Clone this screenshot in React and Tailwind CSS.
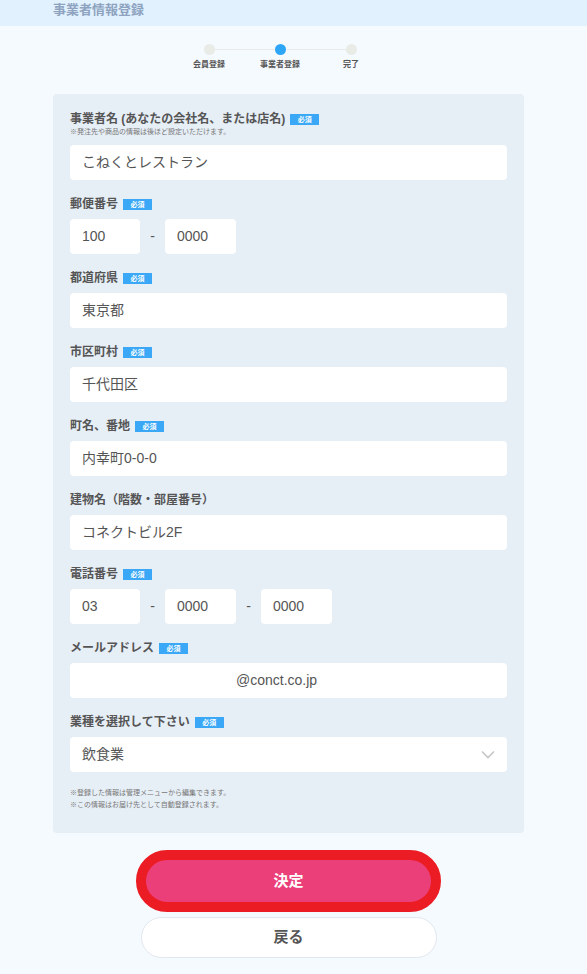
import React from "react";

const FONT = { fontFamily: '"Liberation Sans", "Noto Sans CJK JP", sans-serif' };

function Badge() {
  return (
    <span className="ml-[5px] inline-flex h-[11px] w-[29px] items-center justify-center bg-[#3aa8f6] text-[7px] leading-none text-white">
      必須
    </span>
  );
}

function Label({ children, required }) {
  return (
    <div className="flex h-4 items-center text-[12px] font-bold leading-4 text-[#555]">
      <span>{children}</span>
      {required && <Badge />}
    </div>
  );
}

function Box({ children, className = "" }) {
  return (
    <div
      className={`flex h-[35px] items-center rounded-[4px] bg-white px-3 text-[14px] text-[#555] ${className}`}
    >
      {children}
    </div>
  );
}

function Field({ label, required, children, note }) {
  return (
    <div className="mb-4">
      <Label required={required}>{label}</Label>
      {note ? (
        <p className="mb-[8px] text-[7px] leading-[10px] text-[#777]">{note}</p>
      ) : (
        <div className="h-[7px]" />
      )}
      {children}
    </div>
  );
}

function Dash() {
  return <span className="w-[25px] text-center text-[14px] text-[#555]">-</span>;
}

export default function App() {
  const steps = ["会員登録", "事業者登録", "完了"];

  return (
    <div className="min-h-[974px] w-full bg-[#f5faff]" style={FONT}>
      {/* header */}
      <div className="flex h-[26px] items-start bg-[#e1f1fe] pl-[53px]">
        <h1 className="text-[13px] font-bold leading-[20px] text-[#8ea3bf]">事業者情報登録</h1>
      </div>

      {/* stepper */}
      <div className="ml-[53px] w-[471px] pt-[18px]">
        <div className="mr-[17px] flex flex-col items-center">
          <div className="flex w-[153px] items-center">
            <span className="h-[11px] w-[11px] rounded-full bg-[#e8ebe6]" />
            <span className="h-px flex-1 bg-[#e8ebe6]" />
            <span className="h-[11px] w-[11px] rounded-full bg-[#2ea6f7]" />
            <span className="h-px flex-1 bg-[#e8ebe6]" />
            <span className="h-[11px] w-[11px] rounded-full bg-[#e8ebe6]" />
          </div>
          <div className="mt-[5px] grid w-[213px] grid-cols-3">
            {steps.map((s) => (
              <span key={s} className="text-center text-[8px] font-bold leading-[10px] text-[#555]">
                {s}
              </span>
            ))}
          </div>
        </div>

        {/* form panel */}
        <div className="mt-[24px] rounded-[4px] bg-[#e6eef6] px-[17px] pb-[22px] pt-[17px]">
          <Field
            label="事業者名 (あなたの会社名、または店名)"
            required
            note="※発注先や商品の情報は後ほど設定いただけます。"
          >
            <Box>こねくとレストラン</Box>
          </Field>

          <Field label="郵便番号" required>
            <div className="flex items-center">
              <Box className="w-[70px]">100</Box>
              <Dash />
              <Box className="w-[71px]">0000</Box>
            </div>
          </Field>

          <Field label="都道府県" required>
            <Box>東京都</Box>
          </Field>

          <Field label="市区町村" required>
            <Box>千代田区</Box>
          </Field>

          <Field label="町名、番地" required>
            <Box>内幸町0-0-0</Box>
          </Field>

          <Field label="建物名（階数・部屋番号）">
            <Box>コネクトビル2F</Box>
          </Field>

          <Field label="電話番号" required>
            <div className="flex items-center">
              <Box className="w-[70px]">03</Box>
              <Dash />
              <Box className="w-[71px]">0000</Box>
              <Dash />
              <Box className="w-[71px]">0000</Box>
            </div>
          </Field>

          <Field label="メールアドレス" required>
            <Box className="pl-[166px]">@conct.co.jp</Box>
          </Field>

          <Field label="業種を選択して下さい" required>
            <Box className="justify-between pr-[12px]">
              <span>飲食業</span>
              <svg width="14" height="9" viewBox="0 0 14 9" fill="none">
                <path d="M1 1.5l6 6 6-6" stroke="#c6c6c6" strokeWidth="1.6" />
              </svg>
            </Box>
          </Field>

          <div className="-mt-px text-[7px] leading-[12px] text-[#777]">
            <p>※登録した情報は管理メニューから編集できます。</p>
            <p>※この情報はお届け先として自動登録されます。</p>
          </div>
        </div>

        {/* buttons */}
        <div className="mt-[17px] flex flex-col items-center pb-4">
          <button className="flex h-[62px] w-[305px] items-center justify-center rounded-full border-[10px] border-[#ec1c24] bg-[#eb3f7a] text-[15px] font-bold text-white">
            決定
          </button>
          <button className="mt-[5px] flex h-[41px] w-[296px] items-center justify-center rounded-full border border-[#e1e7ee] bg-white text-[15px] font-bold text-[#555]">
            戻る
          </button>
        </div>
      </div>
    </div>
  );
}
